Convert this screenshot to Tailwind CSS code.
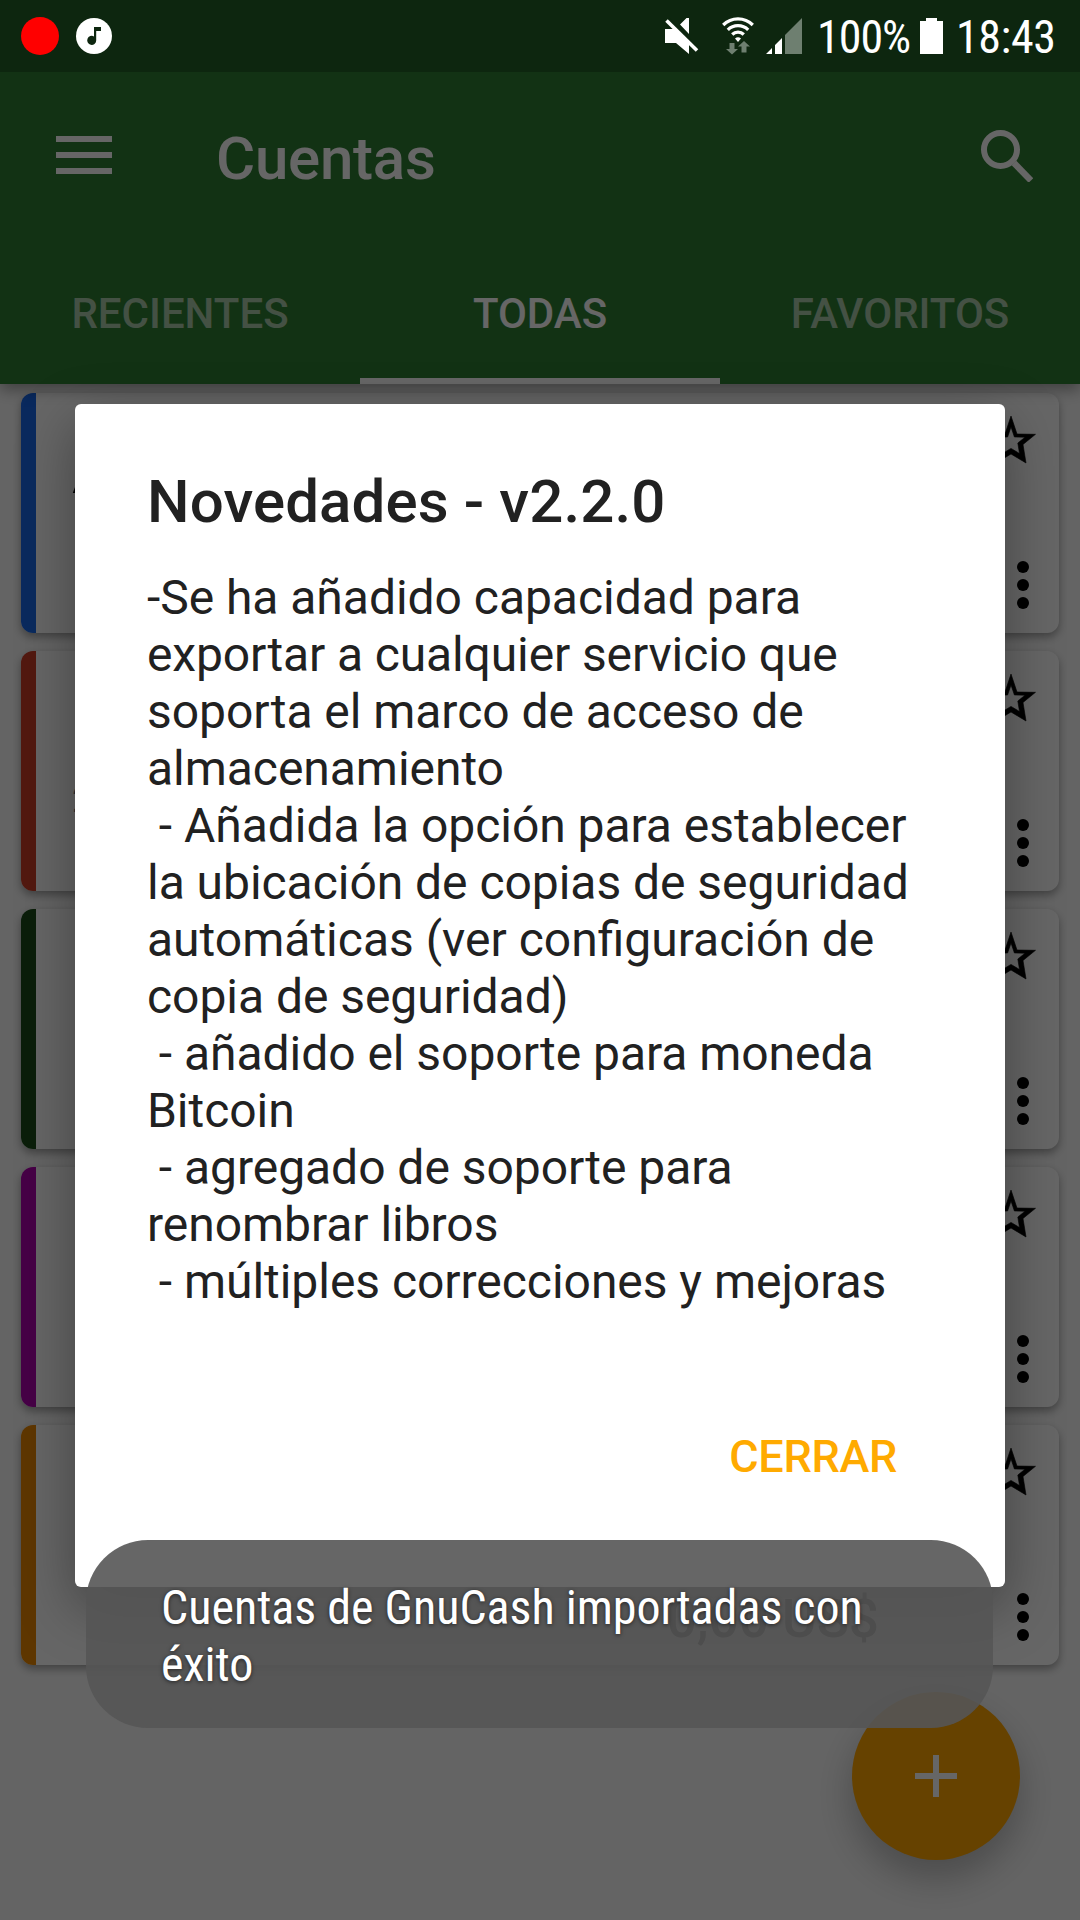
<!DOCTYPE html>
<html lang="es">
<head>
<meta charset="utf-8">
<title>GnuCash - Cuentas</title>
<script src="https://cdn.jsdelivr.net/npm/@tailwindcss/browser@4"></script>
</head>
<body class="font-['Roboto',sans-serif] bg-black">
<div class="relative w-[1080px] h-[1920px] overflow-hidden bg-[#fafafa]">

  <div class="flex flex-col h-full">
    <header class="relative z-10 flex flex-col pt-[72px] h-[384px] bg-[#2e7d32] text-white shadow-[0_6px_14px_rgba(0,0,0,0.35)]">
      <div class="flex items-center h-[168px] pl-14 pr-[47px]">
        <svg class="w-14 h-[38px] -mt-[2px]" viewBox="0 0 56 38" fill="currentColor"><path d="M0 0h56v6H0zM0 16h56v6H0zM0 32h56v6H0z"/></svg>
        <h1 class="ml-[104px] mt-[5px] text-[60px] leading-[72px] font-medium tracking-[-0.25px]">Cuentas</h1>
        <svg class="ml-auto w-[52px] h-[52px]" viewBox="0 0 52 52" fill="none" stroke="currentColor" stroke-width="6"><circle cx="19.5" cy="19.5" r="16.5"/><path d="M33 33L50 50.500" stroke-width="6.500"/></svg>
      </div>
      <nav class="grid grid-cols-3 h-[144px] text-[42px] font-medium text-center">
        <div class="flex items-center justify-center pt-[3px] text-white/60">RECIENTES</div>
        <div class="flex items-center justify-center pt-[9px] border-b-6 border-white">TODAS</div>
        <div class="flex items-center justify-center pt-[3px] text-white/60">FAVORITOS</div>
      </nav>
    </header>

    <main id="cards" class="flex flex-col gap-[18px] pt-[9px] px-[21px]"></main>
  </div>

  <button class="absolute left-[852px] top-[1692px] w-[168px] h-[168px] rounded-full bg-[#ffa500] flex items-center justify-center shadow-[0_18px_36px_rgba(0,0,0,0.25)]">
    <svg class="w-[42px] h-[42px]" viewBox="0 0 42 42" fill="#fff"><path d="M18 0h6v18h18v6H24v18h-6V24H0v-6h18z"/></svg>
  </button>

  <div class="absolute inset-0 z-20 bg-black/60"></div>

  <div class="absolute z-30 top-0 left-0 w-full h-[72px] bg-[#0d260f] flex items-center pl-[21px] pr-[27px] text-white">
    <svg class="w-[38px] h-[38px]" viewBox="0 0 38 38"><circle cx="19" cy="19" r="19" fill="#f00"/></svg>
    <svg class="ml-[17px] w-9 h-9" viewBox="0 0 36 36"><circle cx="18" cy="18" r="18" fill="#fff"/><path d="M18 9h7v4h-4.800v9.500a4.500 4.500 0 1 1-2.200-4z" fill="#0d260f"/></svg>
    <svg class="ml-auto w-[34px] h-9" viewBox="0 0 34 36" fill="#fff"><path d="M0 11h9L24 26v10L11 25H0zM15 6.500L21.500 0H24v16z"/><path d="M3 0.500L33.500 30.500" stroke="#0d260f" stroke-width="3"/><path d="M1.500 2.500L32 32.500" stroke="#fff" stroke-width="3.600"/></svg>
    <svg class="ml-[23px] w-8 h-[38px]" viewBox="0 0 32 38" fill="none" stroke="#fff" stroke-width="3.200"><path d="M1.200 8a21 21 0 0 1 29.600 0M5.800 12.800a14.500 14.500 0 0 1 20.400 0M10.200 17.500a8.200 8.200 0 0 1 11.600 0"/><path d="M16 25l-3-3.500q3-2.500 6 0z" fill="#fff" stroke="none"/><path d="M7.500 26h5v6h3.500l-6 5.500-6-5.500h3.500zM19.500 35.500h5v-6H28L22 24l-6 5.500h3.500z" fill="#6e7f70" stroke="none"/></svg>
    <svg class="ml-3 w-9 h-9" viewBox="0 0 36 36"><path d="M0 36l6-6v6zM9 36V27l7-7v16z" fill="#fff"/><path d="M19 36V17L36 0v36z" fill="#6e7f70"/></svg>
    <div class="ml-[15px] w-[95px] mt-[2px]"><span class="block whitespace-nowrap text-[46px] leading-[56px] tracking-[-1px] font-['Roboto_Condensed','Roboto',sans-serif] font-stretch-condensed">100%</span></div>
    <svg class="ml-[8px] w-[23px] h-9" viewBox="0 0 23 36" fill="#fff"><path d="M6 0h11v3h6v33H0V3h6z"/></svg>
    <div class="ml-[13px] w-[97px] mt-[2px]"><span class="block whitespace-nowrap text-[46px] leading-[56px] tracking-[-0.4px] font-['Roboto_Condensed','Roboto',sans-serif] font-stretch-condensed">18:43</span></div>
  </div>

  <section class="absolute z-30 left-[75px] top-[404px] w-[930px] h-[1183px] rounded-md bg-white text-[#212121] shadow-[0_20px_56px_rgba(0,0,0,0.36)] flex flex-col px-[72px] pt-[62px]">
    <h2 class="text-[60px] leading-[72px] font-medium tracking-[0.12px]">Novedades - v2.2.0</h2>
    <p class="mt-[31px] text-[48px] leading-[57px] tracking-[-0.04px] whitespace-pre">-Se ha añadido capacidad para
<span class="tracking-[-0.12px]">exportar a cualquier servicio que</span>
soporta el marco de acceso de
almacenamiento
 - Añadida la opción para establecer
la ubicación de copias de seguridad
<span class="tracking-normal">automáticas (ver configuración de</span>
copia de seguridad)
 - añadido el soporte para moneda
Bitcoin
 - agregado de soporte para
renombrar libros
 - múltiples correcciones y mejoras</p>
    <button class="self-end mt-[117px] mr-[36px] text-[45px] leading-[60px] font-medium tracking-[-0.3px] text-[#ffaa00]">CERRAR</button>
  </section>

  <div class="absolute z-40 left-[86px] top-[1540px] w-[907px] h-[188px] rounded-[62px] bg-[#555]/90 pl-[75px] pt-[39px] text-white">
    <p class="text-[48px] leading-[57px] whitespace-pre font-['Roboto_Condensed','Roboto',sans-serif] font-stretch-condensed [text-shadow:0_1px_4px_rgba(0,0,0,0.6)]">Cuentas de GnuCash importadas con
éxito</p>
  </div>
</div>

<script>
const accounts = [
  { color: '#1969eb', name: 'Activos', sub: '', balance: '' },
  { color: '#cc3f2a', name: '', sub: '2 subcuentas', balance: '' },
  { color: '#1c4d1a', name: '', sub: '', balance: '' },
  { color: '#af00af', name: '', sub: '', balance: '' },
  { color: '#eb8700', name: '', sub: '', balance: '0,00 US$' },
];
document.getElementById('cards').innerHTML = accounts.map(a => `
  <article class="flex h-[240px] rounded-xl overflow-hidden bg-white shadow-[0_4px_8px_rgba(0,0,0,0.35)]">
    <div class="w-[15px] shrink-0" style="background:${a.color}"></div>
    <div class="flex-1 flex flex-col pl-[36px] pt-[52px]">
      <div class="h-[60px] text-[53px] leading-[60px]">${a.name}</div>
      <div class="h-[44px] mt-[15px] text-[36px] leading-[44px] text-gray-500">${a.sub}</div>
      <div class="-mt-[7px] pr-[108px] h-[60px] text-right text-[53px] leading-[60px] font-medium text-black">${a.balance}</div>
    </div>
    <div class="flex flex-col items-center w-[54px] mr-[18px] pt-[23px]">
      <svg class="w-[50px] h-12 -ml-[6px]" viewBox="-25 416 50 48"><path fill-rule="evenodd" stroke="#000" stroke-width="0.600" d="M0 416L6 434l18.500.300L12 444.500l3 18.500L0 454l-15 9 3-18.500-12.500-10.200L-6 434zM0 427l-3.400 10-10.600.200L-6.800 443-8.500 453.500 0 448.400l8.500 5.100L6.800 443l7.200-5.800L3.400 437z"/></svg>
      <svg class="mt-[97px] ml-[17px] w-3 h-12" viewBox="0 0 12 48"><circle cx="6" cy="6" r="6"/><circle cx="6" cy="24" r="6"/><circle cx="6" cy="42" r="6"/></svg>
    </div>
  </article>`).join('');
</script>
</body>
</html>
